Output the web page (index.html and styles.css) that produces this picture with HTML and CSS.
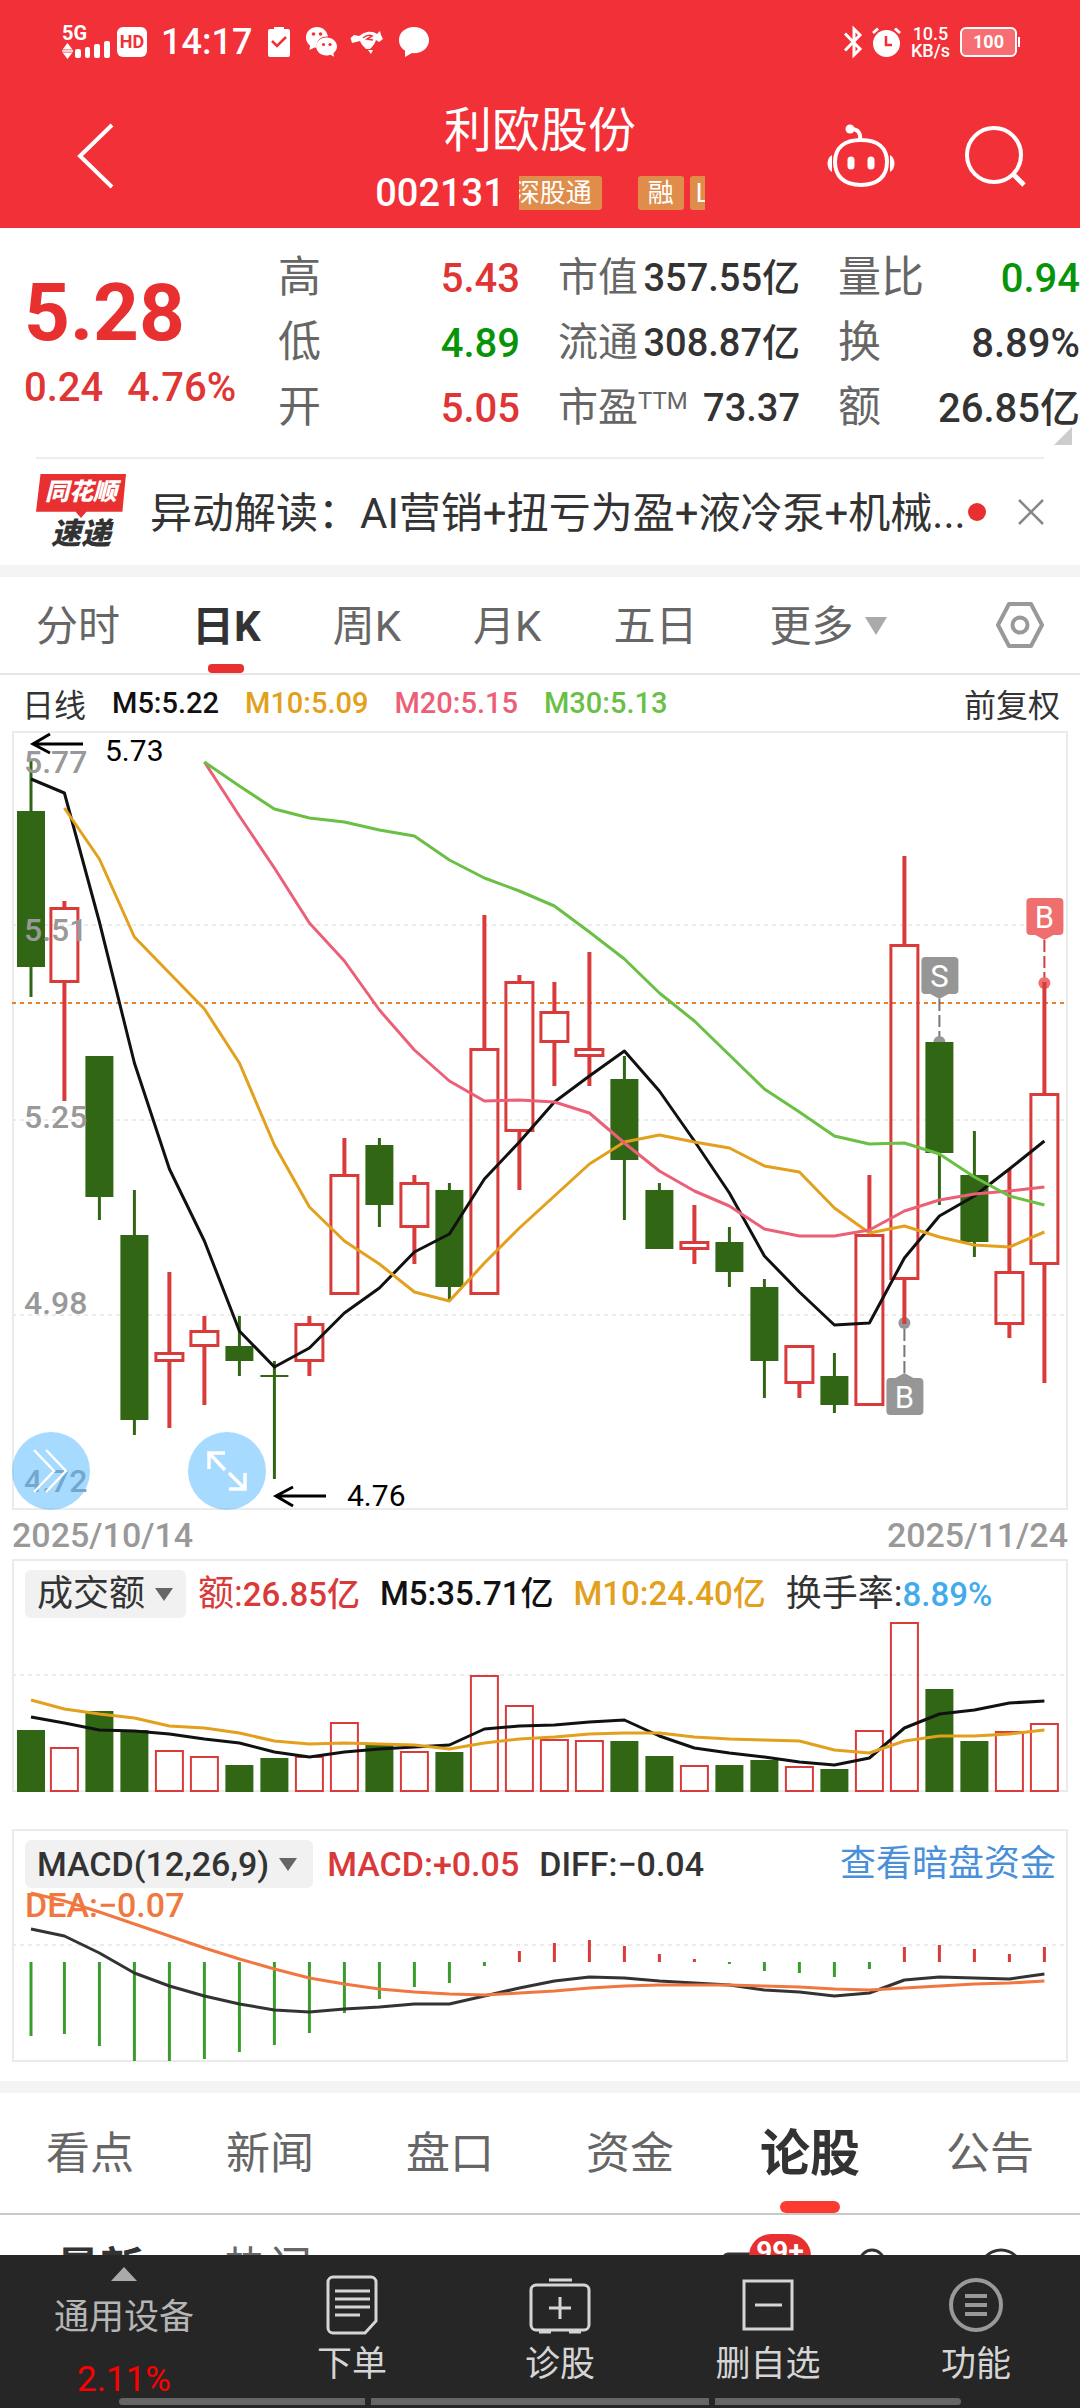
FILE: index.html
```html
<!DOCTYPE html>
<html lang="zh-CN">
<head>
<meta charset="utf-8">
<meta name="viewport" content="width=device-width, initial-scale=1">
<title>利欧股份 002131</title>
<link rel="stylesheet" href="styles.css">
</head>
<body>
<div class="app">
  <header class="top">
    <div class="status">
      <div class="status-group">
        <svg class="signal" width="50" height="36" viewBox="0 0 50 36" fill="#fff"><text x="0" y="16" class="net">5G</text><path d="M5.500 19l5 6.500h-10zM5.500 35l5-6.500h-10zM0 26.200h11v1.600H0z"/><rect x="13" y="25" width="6" height="9" rx="2"/><rect x="23" y="23" width="5" height="11" rx="2"/><rect x="32" y="20" width="6" height="14" rx="2"/><rect x="42" y="17" width="6" height="17" rx="2"/></svg>
        <span class="hd">HD</span>
        <time class="clock">14:17</time>
        <svg width="22" height="30" viewBox="0 0 22 30"><path d="M0 4a2 2 0 0 1 2-2h4V0h10v2h4a2 2 0 0 1 2 2v24a2 2 0 0 1-2 2H2a2 2 0 0 1-2-2z" fill="#fff"/><path d="M4 14l5 5 9-9" fill="none" stroke="#f13038" stroke-width="2.500"/></svg>
        <svg width="31" height="30" viewBox="0 0 31 30" fill="#fff"><path d="M11 0C5 0 0 4.500 0 10.500c0 3.500 1.500 6 4 8L3.500 23l5-2.500 2 .2C10 13 15 9 22 9.500 21 4 17 0 11 0z"/><path d="M20.500 10.500c-6 0-10.300 4-10.300 9s4.500 9 10.300 9c1.500 0 3-.3 4-.8l3.500 2-.5-3.700c2-1.500 3.500-3.800 3.500-6.500 0-5-4.500-9-10.500-9z"/><g fill="#f13038"><circle cx="7.500" cy="7" r="1.800"/><circle cx="14.500" cy="7" r="1.800"/><circle cx="17.500" cy="17.500" r="1.600"/><circle cx="24" cy="17.500" r="1.600"/></g></svg>
        <svg width="30" height="24" viewBox="0 0 30 24" fill="#fff"><path d="M1 5l5 1 4-2.500C15 1 20 1 24 4l3-3 1 4 2 4-4 3-3-2c-1 4-4 7-6 9h-4c-2-2-5-5-6-8l-8 2-1.500-5z"/><path d="M15 20h5l-2 4z"/><path d="M10 8q5-4 9-2l-5 3 6 1" fill="none" stroke="#f13038" stroke-width="1.500"/></svg>
        <svg width="30" height="30" viewBox="0 0 30 30" fill="#fff"><path d="M15 0C6.500 0 0 5.500 0 13c0 5 2.500 8.500 6 10.500L6 30l7-4 2 .2c8.500 0 15-5.700 15-13S23.500 0 15 0z"/></svg>
      </div>
      <div class="status-group right">
        <svg width="18" height="30" viewBox="0 0 18 30" fill="none" stroke="#fff" stroke-width="3"><path d="M1 6.500L16 22l-6 6V2l6 6L1 23.500"/></svg>
        <svg width="29" height="30" viewBox="0 0 29 30"><circle cx="14.500" cy="16.500" r="13.500" fill="#fff"/><path d="M1 6l5-4.500M28 6l-5-4.500" stroke="#fff" stroke-width="3"/><path d="M14 9v9h6" fill="none" stroke="#f13038" stroke-width="2.500"/></svg>
        <span class="speed">10.5<br>KB/s</span>
        <span class="battery">100</span>
      </div>
    </div>
    <div class="titlebar">
      <button class="icon-btn back" aria-label="返回"><svg width="40" height="66" viewBox="0 0 40 66" fill="none" stroke="#fff" stroke-width="4"><path d="M37 2L5 33l32 31"/></svg></button>
      <div class="stock">
        <h1>利欧股份</h1>
        <div class="stock-sub"><span class="code">002131</span><span class="tags"><span class="tag first">深股通</span><span class="tag">融</span><span class="tag last">L</span></span></div>
      </div>
      <div class="actions">
        <button class="icon-btn" aria-label="智能助手"><svg width="70" height="64" viewBox="0 0 70 64" fill="none" stroke="#fff" stroke-width="4"><path d="M35 16C18 16 9 24 9 38s9 23 26 23 26-9 26-23-9-22-26-22z"/><path d="M34 16c1-7-2-11-9-11" /><circle cx="24" cy="5" r="4.500" fill="#fff" stroke="none"/><path d="M6 31c-6 3-6 14 0 17zM64 31c6 3 6 14 0 17z" fill="#fff" stroke="none"/><path d="M25 36v6M45 36v6" stroke-width="7" stroke-linecap="round"/></svg></button>
        <button class="icon-btn" aria-label="搜索"><svg width="62" height="62" viewBox="0 0 62 62" fill="none" stroke="#fff" stroke-width="4"><circle cx="30" cy="30" r="27"/><path d="M49 49l11 11" stroke-width="5"/></svg></button>
      </div>
    </div>
  </header>

  <main class="content">
    <section class="quote">
      <div class="price-col">
        <div class="price">5.28</div>
        <div class="change"><span>0.24</span><span>4.76%</span></div>
      </div>
      <dl><div><dt>高</dt><dd class="up">5.43</dd></div><div><dt>低</dt><dd class="down">4.89</dd></div><div><dt>开</dt><dd class="up">5.05</dd></div></dl>
      <dl class="compact"><div><dt>市值</dt><dd>357.55亿</dd></div><div><dt>流通</dt><dd>308.87亿</dd></div><div><dt>市盈<sup>TTM</sup></dt><dd>73.37</dd></div></dl>
      <dl><div><dt>量比</dt><dd class="down">0.94</dd></div><div><dt>换</dt><dd>8.89%</dd></div><div><dt>额</dt><dd>26.85亿</dd></div></dl>
      <i class="corner"></i>
    </section>

    <section class="news">
      <div class="news-logo"><span class="logo-top">同花顺</span><span class="logo-bottom">速递</span></div>
      <a href="#" class="news-text">异动解读：AI营销+扭亏为盈+液冷泵+机械...</a>
      <i class="dot"></i>
      <button class="close" aria-label="关闭"><svg width="26" height="26" viewBox="0 0 26 26" stroke="#888" stroke-width="2.500"><path d="M1 1l24 24M25 1L1 25"/></svg></button>
    </section>

    <nav class="periods">
      <button>分时</button><button class="active">日K</button><button>周K</button><button>月K</button><button>五日</button><button class="more">更多<i class="tri"></i></button>
      <button class="settings" aria-label="设置"><svg width="48" height="48" viewBox="0 0 48 48" fill="none" stroke="#999" stroke-width="4" stroke-linejoin="round"><path d="M13 3h22l11 21-11 21H13L2 24z"/><circle cx="24" cy="24" r="7.500"/></svg></button>
    </nav>

    <section class="charts">
      <div class="legend">
        <span class="name">日线</span><span class="ma5">M5:5.22</span><span class="ma10">M10:5.09</span><span class="ma20">M20:5.15</span><span class="ma30">M30:5.13</span><button class="adjust">前复权</button>
      </div>
      <div class="panel">
        <svg id="kline" viewBox="12 731 1056 779" role="img" aria-label="日K线图"></svg>
        <button class="round left" aria-label="展开"><svg width="36" height="44" viewBox="0 0 36 44" fill="none" stroke="#fff" stroke-width="2.500"><path d="M1 1l20 21L1 43M13 1l20 21-20 21"/></svg></button>
        <button class="round zoom" aria-label="全屏"><svg width="40" height="40" viewBox="0 0 40 40" fill="none" stroke="#fff" stroke-width="3.500"><path d="M2 18V2h16M2 2l16 17M38 22v16H22M38 38L22 22"/></svg></button>
      </div>
      <div class="dates"><time>2025/10/14</time><time>2025/11/24</time></div>
      <div class="panel">
        <svg id="volume" viewBox="12 1559 1056 234" role="img" aria-label="成交额"></svg>
        <div class="overlay turnover">
          <button class="picker">成交额<i class="tri"></i></button>
          <span class="red"><b>额:</b>26.85亿</span><span class="ma5">M5:35.71亿</span><span class="ma10">M10:24.40亿</span><span class="turn"><b>换手率:</b><em>8.89%</em></span>
        </div>
      </div>
      <div class="panel macd-panel">
        <svg id="macd" viewBox="12 1829 1056 234" role="img" aria-label="MACD"></svg>
        <div class="overlay">
          <button class="picker">MACD(12,26,9)<i class="tri"></i></button>
          <span class="red">MACD:+0.05</span><span>DIFF:−0.04</span><a href="#" class="dark-link">查看暗盘资金</a>
          <span class="dea">DEA:−0.07</span>
        </div>
      </div>
    </section>

    <nav class="sections">
      <a href="#">看点</a><a href="#">新闻</a><a href="#">盘口</a><a href="#">资金</a><a href="#" class="active">论股</a><a href="#">公告</a>
    </nav>
    <section class="feed">
      <button class="active">最新</button><button>热门</button>
      <span class="feed-icons">
        <span class="msg"><svg width="44" height="40" viewBox="0 0 44 40" fill="none" stroke="#333" stroke-width="3"><rect x="2" y="2" width="40" height="34" rx="4"/></svg><span class="badge">99+</span></span>
        <svg width="28" height="46" viewBox="0 0 28 46" fill="none" stroke="#333" stroke-width="3"><circle cx="14" cy="14" r="12"/></svg>
        <svg width="46" height="46" viewBox="0 0 46 46" fill="none" stroke="#333" stroke-width="3"><circle cx="23" cy="23" r="21"/></svg>
      </span>
    </section>
  </main>

  <nav class="bottom">
    <a href="#" class="sector"><i class="tri up-tri"></i><span>通用设备</span><span class="pct">2.11%</span></a>
    <a href="#"><svg width="52" height="60" viewBox="0 0 52 60" fill="none" stroke="#d5d5d5" stroke-width="3"><path d="M7 2h38a5 5 0 0 1 5 5v39L39 58H7a5 5 0 0 1-5-5V7a5 5 0 0 1 5-5z"/><path d="M9 16h35M9 24h35M9 32h35M9 40h25"/></svg>下单</a>
    <a href="#"><svg width="62" height="60" viewBox="0 0 62 60" fill="none" stroke="#d5d5d5" stroke-width="3"><rect x="2" y="10" width="58" height="45" rx="5"/><path d="M20 5h23M31 22v22M20 33h22M10 57h12M40 57h12"/></svg>诊股</a>
    <a href="#"><svg width="52" height="60" viewBox="0 0 52 60" fill="none" stroke="#d5d5d5" stroke-width="3"><rect x="2" y="6" width="48" height="48"/><path d="M13 30h27"/></svg>删自选</a>
    <a href="#"><svg width="54" height="60" viewBox="0 0 54 60" fill="none" stroke="#999" stroke-width="4"><circle cx="27" cy="30" r="25"/><path d="M16 21h22M16 30h22M16 39h22"/></svg>功能</a>
    <span class="gesture"><i></i><i></i><i></i></span>
  </nav>
</div>
<script src="chart.js"></script>
</body>
</html>
```

FILE: styles.css
```css
* { box-sizing: border-box; }
body {
  margin: 0;
  background: #fff;
  color: #333;
  font-family: Roboto, "Noto Sans CJK SC", sans-serif;
}
h1, dl, dd { margin: 0; font-weight: 400; }
b { font-weight: 400; }
em, i { font-style: normal; }
a { color: inherit; text-decoration: none; }
button {
  padding: 0;
  border: 0;
  background: none;
  color: inherit;
  font: inherit;
  white-space: nowrap;
}
svg { display: block; flex: none; overflow: visible; }

.app {
  display: flex;
  flex-direction: column;
  height: 100vh;
}
.content {
  flex: 1;
  min-height: 0;
  overflow: hidden;
}

/* header */
.top { background: #f13038; color: #fff; }
.status {
  display: flex;
  justify-content: space-between;
  align-items: center;
  height: 84px;
  padding: 0 63px 0 62px;
}
.status-group { display: flex; align-items: center; gap: 16px; }
.status-group.right { gap: 10px; }
.net { font-size: 20px; font-weight: 700; }
.signal { margin-right: -11px; }
.hd {
  width: 30px;
  height: 30px;
  margin-right: -2px;
  border-radius: 6px;
  background: #fff;
  color: #f13038;
  font-size: 18px;
  font-weight: 700;
  line-height: 30px;
  text-align: center;
}
.clock { font-size: 36px; font-weight: 500; line-height: 42px; }
.speed { font-size: 18px; font-weight: 500; line-height: 17px; text-align: center; }
.battery {
  position: relative;
  width: 57px;
  height: 30px;
  border: 2px solid #fff;
  border-radius: 6px;
  background: #f76d72;
  font-size: 18px;
  font-weight: 700;
  line-height: 26px;
  text-align: center;
}
.battery::after {
  content: "";
  position: absolute;
  right: -5px;
  top: 8px;
  width: 2px;
  height: 10px;
  background: #fff;
}
.titlebar {
  display: grid;
  grid-template-columns: 1fr auto 1fr;
  align-items: center;
  height: 144px;
}
.back { justify-self: start; margin-left: 75px; }
.stock { padding-top: 4px; text-align: center; }
h1 { font-size: 48px; line-height: 70px; }
.stock-sub { display: flex; align-items: center; gap: 14px; height: 54px; }
.code { font-size: 38px; font-weight: 500; }
.tags { display: flex; gap: 6px; width: 186px; overflow: hidden; }
.tag {
  flex: none;
  height: 34px;
  padding: 0 10px;
  border-radius: 3px;
  background: #e08d4b;
  font-size: 26px;
  line-height: 34px;
}
.tag.first { margin: 0 30px 0 -15px; }
.tag.last { padding-left: 6px; }
.actions { display: flex; justify-content: flex-end; align-items: center; gap: 68px; padding-right: 54px; }

/* quote */
.quote {
  position: relative;
  display: grid;
  grid-template-columns: 216px repeat(3, minmax(0, 1fr));
  gap: 38px;
  height: 229px;
  padding: 17px 0 0 24px;
}
.price { margin-top: 15px; color: #e83030; font-size: 80px; font-weight: 700; line-height: 106px; }
.change {
  display: flex;
  gap: 24px;
  color: #e03535;
  font-size: 40px;
  font-weight: 500;
  line-height: 44px;
}
.quote dl > div {
  display: flex;
  justify-content: space-between;
  align-items: baseline;
  height: 65px;
  line-height: 65px;
  white-space: nowrap;
}
.quote dt { color: #666; font-size: 43px; }
.quote dd { font-size: 40px; font-weight: 500; }
.quote .compact dt { font-size: 40px; }
.quote .compact dd { font-size: 38px; }
.quote sup { font-size: 24px; line-height: 24px; vertical-align: 12px; }
.quote .up { color: #e03535; }
.quote .down { color: #089408; }
.corner {
  position: absolute;
  right: 8px;
  bottom: 12px;
  width: 0;
  border-left: 18px solid transparent;
  border-bottom: 18px solid #ccc;
}

/* news */
.news {
  display: flex;
  align-items: center;
  height: 108px;
  margin: 0 36px;
  border-top: 2px solid #eee;
}
.news-logo { width: 90px; margin-right: 24px; font-style: italic; font-weight: 900; text-align: center; }
.logo-top {
  display: block;
  height: 44px;
  background: #e83030;
  clip-path: polygon(5% 0, 100% 0, 96% 86%, 56% 86%, 50% 100%, 44% 86%, 0 86%);
  color: #fff;
  font-size: 24px;
  line-height: 36px;
}
.logo-bottom { display: block; font-size: 30px; line-height: 32px; }
.news-text { padding-bottom: 6px; font-size: 42px; white-space: nowrap; overflow: hidden; }
.dot { flex: none; width: 18px; height: 18px; margin-left: 2px; border-radius: 50%; background: #e83030; }
.close { margin-left: auto; }

/* period tabs */
.periods {
  display: flex;
  align-items: center;
  gap: 72px;
  height: 110px;
  padding: 0 36px;
  border-top: 12px solid #f4f4f4;
  border-bottom: 2px solid #e6e6e6;
  color: #666;
  font-size: 42px;
}
.periods button { position: relative; height: 96px; padding-bottom: 6px; }
.periods .active { color: #333; font-weight: 700; }
.periods .active::after, .sections .active::after {
  content: "";
  position: absolute;
  left: 50%;
  bottom: 0;
  width: 36px;
  height: 9px;
  margin-left: -18px;
  border-radius: 4px;
  background: #e83030;
}
.tri {
  display: inline-block;
  border: 11px solid transparent;
  border-top: 18px solid #aaa;
  border-bottom: 0;
}
.more .tri { margin-left: 12px; vertical-align: 6px; }
.periods .settings { margin-left: auto; padding-bottom: 0; }

/* charts */
.charts { padding: 0 12px 18px; }
.legend {
  display: flex;
  align-items: center;
  gap: 26px;
  height: 56px;
  padding: 0 8px 0 10px;
  font-size: 29px;
  font-weight: 500;
}
.legend .name, .adjust { font-size: 32px; font-weight: 400; }
.adjust { margin-left: auto; }
.ma5 { color: #111; }
.ma10 { color: #e2a01c; }
.ma20 { color: #eb6076; }
.ma30 { color: #6abf45; }
.panel { position: relative; }
.panel > svg { width: 100%; height: auto; }
.round {
  position: absolute;
  bottom: 0;
  display: grid;
  place-items: center;
  width: 78px;
  height: 78px;
  border-radius: 50%;
  background: rgba(77, 183, 255, 0.5);
}
.round.left { left: 0; }
.round.zoom { left: 176px; }
.dates {
  display: flex;
  justify-content: space-between;
  align-items: center;
  height: 49px;
  color: #999;
  font-size: 34px;
  font-weight: 500;
}
.overlay {
  position: absolute;
  inset: 11px 12px auto 13px;
  display: flex;
  flex-wrap: wrap;
  align-items: flex-start;
  column-gap: 20px;
  font-size: 34px;
  font-weight: 500;
  line-height: 48px;
}
.overlay > * { height: 48px; }
.overlay.turnover { font-size: 33px; }
.overlay b, .dark-link { font-size: 36px; }
.overlay .picker {
  margin-right: -6px;
  padding: 0 16px 0 12px;
  border-radius: 6px;
  background: #f1f1f1;
}
.turnover .picker { margin-right: -8px; padding-right: 13px; font-size: 36px; font-weight: 400; line-height: 44px; }
.picker .tri { margin-left: 10px; border-width: 13px 9px 0; border-top-color: #666; vertical-align: 5px; }
.red { color: #d83a3a; }
.turn em { color: #41abeb; }
.macd-panel { margin-top: 36px; }
.dark-link { margin-left: auto; color: #4a90d9; font-weight: 400; }
.overlay .dea { flex-basis: 100%; height: 36px; color: #f07840; line-height: 34px; }

.chart-border { fill: none; stroke: #ebebeb; stroke-width: 2; }
.grid-line { stroke: #ebebeb; stroke-width: 2; stroke-dasharray: 4 4; }
.cost-line { stroke: #e8812d; stroke-width: 2; stroke-dasharray: 4 4; }
.axis-label { fill: #999; font-size: 32px; font-weight: 500; }
.peak-label { fill: #000; font-size: 30px; }
.peak-arrow { fill: none; stroke: #000; stroke-width: 3; }
.marker-label { fill: #fff; font-size: 31px; text-anchor: middle; }
.ma-line { fill: none; stroke-width: 3; stroke-linejoin: round; }

/* section tabs */
.sections {
  display: grid;
  grid-template-columns: repeat(6, 1fr);
  height: 134px;
  border-top: 12px solid #f4f4f4;
  border-bottom: 2px solid #c8c8c8;
  color: #666;
  font-size: 44px;
  line-height: 122px;
  text-align: center;
}
.sections a { position: relative; height: 120px; }
.sections .active { color: #333; font-size: 50px; font-weight: 700; }
.sections .active::after { width: 60px; height: 12px; margin-left: -30px; border-radius: 6px; background: #fb3a30; }
.feed { display: flex; align-items: flex-start; gap: 80px; padding: 18px 56px 0; color: #666; font-size: 44px; }
.feed .active { color: #333; font-weight: 700; }
.feed-icons { display: flex; gap: 92px; margin: 15px 0 0 auto; }
.msg { position: relative; margin-top: 4px; }
.badge {
  position: absolute;
  left: 27px;
  top: -18px;
  width: 62px;
  height: 44px;
  border-radius: 22px;
  background: #e83030;
  color: #fff;
  font-size: 28px;
  font-weight: 700;
  line-height: 36px;
  text-align: center;
}

/* bottom bar */
.bottom {
  position: relative;
  display: grid;
  grid-template-columns: 248px repeat(4, 1fr);
  height: 153px;
  background: #262626;
  color: #d5d5d5;
  font-size: 35px;
  text-align: center;
}
.bottom a { display: flex; flex-direction: column; align-items: center; gap: 5px; padding-top: 20px; line-height: 50px; }
.bottom .sector { gap: 12px; padding-top: 12px; color: #b5b5b5; }
.up-tri { border: 13px solid transparent; border-bottom: 14px solid #aaa; border-top: 0; }
.pct { color: #f00; }
.gesture {
  position: absolute;
  left: 11%;
  right: 11%;
  bottom: 3px;
  display: grid;
  grid-template-columns: 245fr 338fr 245fr;
  gap: 6px;
  height: 7px;
  border-radius: 4px;
  overflow: hidden;
}
.gesture i { background: #666; }
```

FILE: chart.js
```js
const RED = '#d93a3a';
const GREEN = '#306614';
const NS = 'http://www.w3.org/2000/svg';

const x = i => (i === 0 ? 31 : 29.4 + 35 * i);

function add(parent, tag, attrs, text) {
  const el = document.createElementNS(NS, tag);
  for (const key in attrs) el.setAttribute(key, attrs[key]);
  if (text) el.textContent = text;
  parent.appendChild(el);
  return el;
}
function line(svg, x1, y1, x2, y2, attrs) {
  add(svg, 'line', { x1, y1, x2, y2, ...attrs });
}
function series(svg, start, ys, color) {
  const points = ys.map((y, i) => x(start + i) + ',' + y).join(' ');
  add(svg, 'polyline', { points, stroke: color, class: 'ma-line' });
}
function frame(svg, top, bottom, rows) {
  add(svg, 'rect', { x: 13, y: top + 1, width: 1054, height: bottom - top - 2, class: 'chart-border' });
  rows.forEach(y => line(svg, 12, y, 1068, y, { class: 'grid-line' }));
}

/* candles: [up, wick top, body top, body bottom, wick bottom] */
const candles = [
  [0, 761, 811, 967, 997], [1, 901, 907, 983, 1101], [0, 1056, 1056, 1197, 1220],
  [0, 1190, 1235, 1420, 1435], [1, 1272, 1352, 1362, 1428], [1, 1316, 1330, 1347, 1405],
  [0, 1316, 1346, 1361, 1376], [0, 1361, 1375, 1377, 1479], [1, 1316, 1323, 1362, 1376],
  [1, 1138, 1174, 1295, 1295], [0, 1138, 1145, 1205, 1227], [1, 1175, 1182, 1228, 1264],
  [0, 1183, 1190, 1287, 1300], [1, 915, 1048, 1295, 1295], [1, 975, 981, 1132, 1190],
  [1, 982, 1011, 1043, 1086], [1, 952, 1048, 1057, 1086], [0, 1056, 1079, 1160, 1220],
  [0, 1183, 1190, 1249, 1249], [1, 1205, 1241, 1250, 1264], [0, 1227, 1242, 1272, 1287],
  [0, 1279, 1287, 1361, 1398], [1, 1345, 1345, 1384, 1398], [0, 1353, 1376, 1405, 1413],
  [1, 1175, 1234, 1406, 1406], [1, 856, 944, 1280, 1324], [0, 1042, 1042, 1153, 1205],
  [0, 1131, 1175, 1242, 1257], [1, 1169, 1271, 1325, 1338], [1, 982, 1093, 1265, 1383],
];

const kline = document.getElementById('kline');
frame(kline, 731, 1510, [925, 1120, 1315]);
line(kline, 12, 1003, 1068, 1003, { class: 'cost-line' });

function marker(i, boxTop, dotY, letter, color, dash) {
  const cx = x(i);
  const below = boxTop > dotY;
  const edge = below ? boxTop : boxTop + 37;
  const tip = below ? edge - 5 : edge + 5;
  add(kline, 'rect', { x: cx - 18, y: boxTop, width: 37, height: 37, rx: 4, fill: color });
  add(kline, 'path', { d: `M${cx - 9} ${edge}L${cx} ${tip}L${cx + 9} ${edge}z`, fill: color });
  line(kline, cx, tip, cx, dotY, { stroke: dash, 'stroke-width': 2, 'stroke-dasharray': '12 4' });
  add(kline, 'circle', { cx, cy: dotY, r: 6, fill: color });
  add(kline, 'text', { x: cx, y: boxTop + 30, class: 'marker-label' }, letter);
}
marker(26, 957, 1042, 'S', '#969696', '#777');
marker(29, 898, 983, 'B', '#ef6f6f', RED);
marker(25, 1378, 1323, 'B', '#969696', '#777');

candles.forEach(([up, high, top, bottom, low], i) => {
  const cx = x(i);
  if (up) {
    const wick = { stroke: RED, 'stroke-width': 4 };
    if (high < top) line(kline, cx, high, cx, top + 1, wick);
    if (low > bottom) line(kline, cx, bottom - 1, cx, low, wick);
    add(kline, 'rect', { x: cx - 13.5, y: top + 1.5, width: 27, height: bottom - top - 3, fill: 'none', stroke: RED, 'stroke-width': 3 });
  } else {
    line(kline, cx, high, cx, low, { stroke: GREEN, 'stroke-width': 3 });
    add(kline, 'rect', { x: cx - 14, y: top, width: 28, height: bottom - top, fill: GREEN });
  }
});

series(kline, 0, [779, 793, 922, 1063, 1169, 1241, 1331, 1367, 1348, 1313, 1288, 1252, 1234, 1179, 1142, 1102, 1076, 1051, 1091, 1141, 1193, 1256, 1292, 1325, 1323, 1258, 1216, 1196, 1169, 1141], '#111');
series(kline, 1, [808, 859, 937, 973, 1009, 1063, 1145, 1207, 1241, 1264, 1292, 1301, 1263, 1228, 1196, 1164, 1142, 1135, 1142, 1148, 1166, 1172, 1208, 1233, 1226, 1237, 1245, 1247, 1232], '#e2a01c');
series(kline, 5, [762, 816, 868, 923, 961, 1010, 1050, 1081, 1101, 1100, 1102, 1113, 1143, 1171, 1191, 1206, 1229, 1236, 1236, 1230, 1211, 1200, 1194, 1191, 1187], '#eb6076');
series(kline, 5, [762, 786, 809, 818, 822, 830, 836, 860, 878, 891, 906, 932, 959, 993, 1021, 1055, 1089, 1112, 1136, 1144, 1143, 1154, 1177, 1196, 1205], '#6abf45');

[[773, '5.77'], [941, '5.51'], [1128, '5.25'], [1314, '4.98'], [1492, '4.72']]
  .forEach(([y, label]) => add(kline, 'text', { x: 24, y, class: 'axis-label' }, label));
add(kline, 'path', { d: 'M83 744H33M50 734L33 744L50 753', class: 'peak-arrow' });
add(kline, 'text', { x: 105, y: 761, class: 'peak-label' }, '5.73');
add(kline, 'path', { d: 'M326 1496H276M293 1487L276 1496L293 1506', class: 'peak-arrow' });
add(kline, 'text', { x: 347, y: 1506, class: 'peak-label' }, '4.76');

/* turnover bars */
const volume = document.getElementById('volume');
frame(volume, 1559, 1792, [1675]);
[1730, 1747, 1711, 1730, 1750, 1756, 1765, 1758, 1756, 1722, 1744, 1751, 1752, 1675, 1705, 1739, 1740, 1741, 1756, 1765, 1765, 1760, 1766, 1769, 1730, 1622, 1689, 1741, 1731, 1723].forEach((top, i) => {
  const cx = x(i);
  if (candles[i][0]) {
    add(volume, 'rect', { x: cx - 13.5, y: top + 1, width: 27, height: 1790 - top, fill: 'none', stroke: RED, 'stroke-width': 2 });
  } else {
    add(volume, 'rect', { x: cx - 14, y: top, width: 28, height: 1792 - top, fill: GREEN });
  }
});
series(volume, 0, [1717, 1723, 1730, 1731, 1734, 1739, 1743, 1752, 1757, 1752, 1749, 1747, 1745, 1729, 1726, 1725, 1722, 1720, 1736, 1748, 1753, 1757, 1762, 1765, 1758, 1728, 1714, 1710, 1703, 1701], '#111');
series(volume, 0, [1700, 1709, 1714, 1718, 1726, 1728, 1733, 1741, 1744, 1743, 1744, 1745, 1749, 1743, 1739, 1737, 1734, 1733, 1733, 1737, 1739, 1740, 1741, 1750, 1753, 1741, 1736, 1736, 1734, 1730], '#e2a01c');

/* macd */
const macd = document.getElementById('macd');
frame(macd, 1829, 2062, [1945]);
[2036, 2034, 2046, 2061, 2061, 2059, 2052, 2045, 2033, 2013, 1999, 1987, 1983, 1966, 1951, 1943, 1940, 1946, 1954, 1959, 1964, 1971, 1973, 1977, 1969, 1947, 1945, 1949, 1954, 1947].forEach((end, i) => {
  line(macd, x(i), 1962, x(i), end, { stroke: end > 1962 ? '#3a9c2c' : RED, 'stroke-width': 3 });
});
series(macd, 0, [1929, 1936, 1953, 1973, 1986, 1996, 2004, 2010, 2012, 2009, 2007, 2004, 2004, 1996, 1988, 1981, 1977, 1978, 1981, 1983, 1985, 1990, 1992, 1996, 1993, 1980, 1977, 1978, 1979, 1974], '#333');
series(macd, 0, [1893, 1901, 1912, 1924, 1936, 1948, 1959, 1969, 1978, 1984, 1989, 1992, 1994, 1995, 1993, 1991, 1988, 1986, 1985, 1985, 1985, 1986, 1987, 1989, 1990, 1988, 1986, 1984, 1983, 1981], '#f07840');
```
